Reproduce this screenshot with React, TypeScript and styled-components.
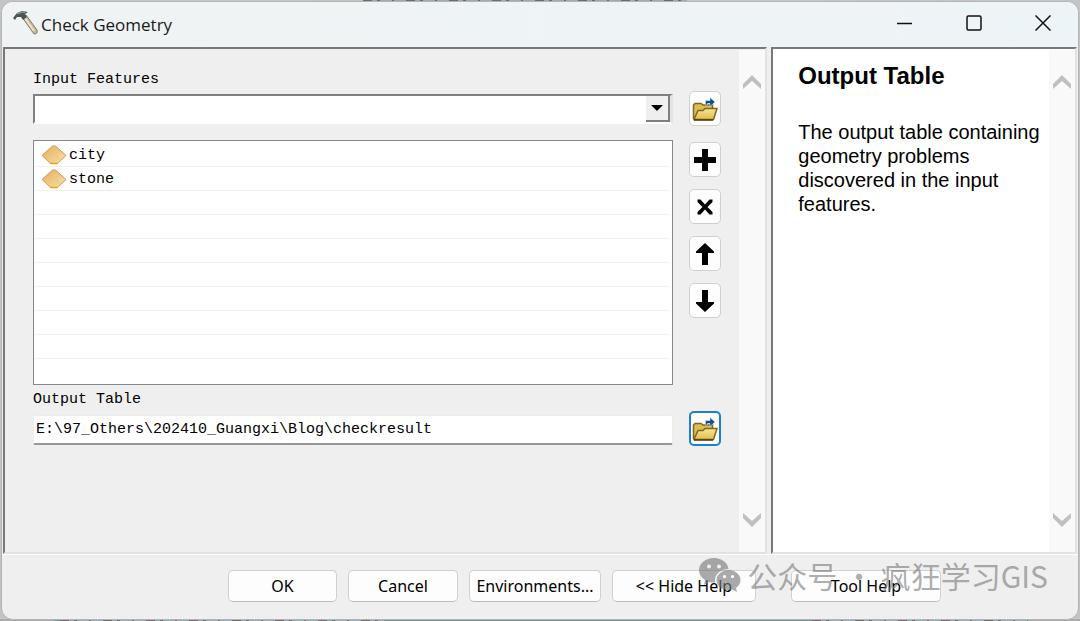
import React from 'react';
import styled, { createGlobalStyle } from 'styled-components';

const mono = '"Liberation Mono", "Noto Sans CJK SC", monospace';
const ui = '"Noto Sans", "Noto Sans CJK SC", sans-serif';

const GlobalStyle = createGlobalStyle`
  * { box-sizing: border-box; }
  body { margin: 0; background: #b4b8b9; color: #000; }
  button, input { font: inherit; color: inherit; }
`;

const speckle = 'repeating-linear-gradient(90deg, #6f6a6c 0 9px, #9aadb3 9px 14px, #6f6a6c 14px 17px, #9aadb3 17px 29px, #6f6a6c 29px 31px, #9aadb3 31px 43px)';

const Desktop = styled.div`
  min-height: 100vh;
  padding: 1px;
  display: flex;
  background:
    ${speckle} 48% 0 / 30% 1px no-repeat,
    ${speckle} 8% 100% / 30% 1px no-repeat,
    ${speckle} 94% 100% / 20% 1px no-repeat,
    linear-gradient(90deg, #a9a9a9 5%, #7e8f96 5%, #7e8f96 95%, #a9a9a9 95%) bottom / 100% 2px no-repeat,
    #c4c4c4;
`;

const Window = styled.section`
  position: relative;
  flex: 1;
  display: flex;
  flex-direction: column;
  border: 1px solid #b4b4b4;
  border-radius: 12px;
  overflow: hidden;
  background: #efefef;
`;

const TitleBar = styled.header`
  display: flex;
  align-items: flex-start;
  height: 45px;
  padding: 8px 0 0 10px;
  background: linear-gradient(90deg, #f0f3f4, #edf4f7);
`;

const Title = styled.h1`
  flex: 1;
  margin: 3px 0 0 3px;
  font: 400 17px/24px "Open Sans", "Noto Sans", sans-serif;
  color: #1a1a1a;
`;

const CaptionButtons = styled.div`
  display: flex;
  padding-right: 1px;
`;

const CaptionButton = styled.button`
  display: flex;
  align-items: center;
  justify-content: center;
  width: 69px;
  height: 26px;
  padding: 0;
  border: 0;
  background: none;
`;

const Panels = styled.main`
  flex: 1;
  display: grid;
  grid-template-columns: minmax(0, 5fr) minmax(0, 2fr);
  gap: 4px;
  padding: 0 1px;
`;

const Panel = styled.section<{ $white?: boolean }>`
  display: flex;
  padding: 1px 0 0 1px;
  border: 2px solid;
  border-color: #787878 #e3e3e3 #e3e3e3 #787878;
  background: ${(p) => (p.$white ? '#fff' : '#efefef')};
`;

const Form = styled.form`
  flex: 1;
  min-width: 0;
  display: grid;
  grid-template-columns: 1fr 32px;
  column-gap: 16px;
  align-content: start;
  padding: 16px 18px 0 27px;
  font: 400 15px/24px ${mono};
`;

const FieldLabel = styled.label`
  grid-column: 1 / -1;
  height: 25px;
  padding-top: 2px;
`;

const Combo = styled.div`
  display: flex;
  height: 30px;
  margin-top: 3px;
  border: solid;
  border-width: 2px 3px 2px 2px;
  border-color: #808080 #e3e3e3 #fff #808080;
  background: #fff;
`;

const ComboInput = styled.input`
  flex: 1;
  min-width: 0;
  padding: 0 4px;
  border: 0;
  outline: 0;
  background: none;
`;

const ComboArrow = styled.button`
  display: flex;
  align-items: center;
  justify-content: center;
  width: 24px;
  padding: 0;
  border: solid;
  border-width: 0 2px 2px 0;
  border-color: #808080;
  background: #efefef;
`;

const List = styled.ul`
  height: 245px;
  margin: 14px 0 1px;
  padding: 2px 3px 0 1px;
  list-style: none;
  border: 1px solid #828790;
  background: #fff;
`;

const ListRow = styled.li`
  display: flex;
  align-items: center;
  gap: 2px;
  height: 24px;
  padding-left: 6px;
  border-bottom: 1px solid #f0f0f0;
  &:last-child { border-bottom: 0; }
`;

const RowName = styled.span`
  padding-top: 2px;
`;

const ToolColumn = styled.div`
  display: flex;
  flex-direction: column;
  gap: 12px;
  padding-top: 16px;
`;

const IconButton = styled.button<{ $active?: boolean }>`
  display: flex;
  align-items: center;
  justify-content: center;
  width: 32px;
  height: 35px;
  padding: 0;
  border: ${(p) => (p.$active ? '2px solid #1a80d2' : '1px solid #cfcfcf')};
  border-radius: 5px;
  background: #fdfdfd;
`;

const OutputInput = styled.input`
  width: 100%;
  height: 30px;
  margin-top: 4px;
  padding: 0 2px;
  border: 1px solid #ececec;
  border-bottom: 2px solid #969696;
  border-radius: 2px;
  outline: 0;
  background: #fff;
`;

const ScrollBar = styled.div`
  display: flex;
  flex-direction: column;
  justify-content: space-between;
  align-items: center;
  width: 26px;
  padding: 24px 0;
  background: #f9f9f9;
`;

const ScrollButton = styled.button`
  display: flex;
  padding: 0;
  border: 0;
  background: none;
`;

const Help = styled.article`
  flex: 1;
  min-width: 0;
  padding: 12px 8px 0 24px;
  font: 400 20px/24px "Liberation Sans", Arial, sans-serif;
`;

const HelpTitle = styled.h2`
  margin: 0 0 30px;
  font-size: 24px;
  line-height: 28px;
`;

const HelpText = styled.p`
  margin: 0;
`;

const Footer = styled.footer`
  display: flex;
  justify-content: flex-end;
  gap: 11px;
  padding: 15px 137px 17px 16px;
  border-top: 1px solid #fff;
  font: 400 16px/24px ${ui};
`;

const PushButton = styled.button<{ $width: number; $apart?: boolean }>`
  width: ${(p) => p.$width}px;
  height: 32px;
  margin-left: ${(p) => (p.$apart ? '24px' : '0')};
  padding: 0;
  white-space: nowrap;
  border: 1px solid #d0d0d0;
  border-bottom-color: #bcbcbc;
  border-radius: 5px;
  background: #fdfdfd;
`;

const Watermark = styled.div`
  position: absolute;
  right: 30px;
  bottom: 24px;
  display: flex;
  align-items: center;
  gap: 6px;
  color: rgba(120, 120, 120, 0.62);
  font: 400 30px/40px "Noto Sans CJK SC", sans-serif;
  white-space: pre;
  pointer-events: none;
`;

const Hammer = () => (
  <svg width="26" height="26" viewBox="0 0 26 26" aria-hidden="true">
    <path d="M10 7 L14 5 L25 20 Q26 24 22 24 Z" fill="#c9b8a0" stroke="#85776a" />
    <path d="M13 8 L22 21" stroke="#eee1cc" strokeWidth="2" />
    <path d="M1 8 L5 3 L10 1 L16 2 L13 4 L15 7 L11 10 L9 7 L5 7 L3 10 Z" fill="#4c5357" />
    <path d="M5 4 L11 2 L13 3" stroke="#9ba4a7" fill="none" />
  </svg>
);

const Diamond = () => (
  <svg width="26" height="20" viewBox="0 0 26 20" aria-hidden="true">
    <defs>
      <linearGradient id="sand" x1="0" y1="0" x2="1" y2="1">
        <stop offset="0" stopColor="#e3ab58" />
        <stop offset="1" stopColor="#fbe3ac" />
      </linearGradient>
    </defs>
    <path d="M11.500 1 H14.500 L25 10.500 L16.500 18.500 H9.500 L1 10.500 Z" fill="url(#sand)" stroke="#cf9d52" strokeLinejoin="round" />
    <path d="M9.500 18.500 H16.500" stroke="#dca800" strokeWidth="1.5" />
  </svg>
);

const Folder = () => (
  <svg width="26" height="26" viewBox="0 0 26 26" aria-hidden="true">
    <defs>
      <linearGradient id="flap" x1="0" y1="0" x2="0" y2="1">
        <stop offset="0" stopColor="#f8e596" />
        <stop offset="1" stopColor="#e0bd4c" />
      </linearGradient>
    </defs>
    <path d="M1.500 23 V9 L3 7.500 H9 L11 9 H20.500 V13" fill="#d9bd59" stroke="#80671c" strokeWidth="1.5" />
    <path d="M2 23.500 L6 14.500 H11 L13 12.500 H25 L21.500 23.500 Z" fill="url(#flap)" stroke="#80671c" strokeWidth="1.5" />
    <path d="M2 24 H21" stroke="#4d3c10" strokeWidth="1.5" />
    <path d="M13.500 9 V4.500 H18 V1.500 L23 6 L18 10.500 V7.500 H15.500 V9 Z" fill="#0c4f94" stroke="#e8f1f8" strokeWidth=".5" />
  </svg>
);

const glyphs = {
  plus: 'M8 0 H14 V8 H22 V14 H14 V22 H8 V14 H0 V8 H8 Z',
  cross: 'M3.500 3.500 H6.500 L11 8.500 L15.500 3.500 H18.500 V6 L13.500 11 L18.500 16 V18.500 H15.500 L11 13.500 L6.500 18.500 H3.500 V16 L8.500 11 L3.500 6 Z',
  up: 'M11 0 L20 8.500 V10 H14 V22 H8 V10 H2 V8.500 Z',
  down: 'M11 22 L20 13.500 V12 H14 V0 H8 V12 H2 V13.500 Z',
};

const Glyph = ({ name }: { name: keyof typeof glyphs }) => (
  <svg width="22" height="22" viewBox="0 0 22 22" aria-hidden="true">
    <path d={glyphs[name]} />
  </svg>
);

const Chevron = ({ down }: { down?: boolean }) => (
  <svg width="18" height="16" viewBox="0 0 18 16" aria-hidden="true">
    <path d={down ? 'M0 1 L9 9 L18 1 V6 L9 15 L0 6 Z' : 'M0 15 L9 7 L18 15 V10 L9 1 L0 10 Z'} fill="#c0c0c0" />
  </svg>
);

const WeChat = () => (
  <svg width="42" height="36" viewBox="0 0 42 36" aria-hidden="true">
    <path
      fillRule="evenodd"
      fill="currentColor"
      d="M15 1 C23 1 29 6 29.500 12 C22 12 16 17 16 23 L16.300 25.500 C14 25.700 12 25.500 10 25 L5 28 L6 23 C2.500 20.500 0 17.500 0 13 C0 6 7 1 15 1 Z M10 7.500 A2 2 0 1 0 10 11.500 A2 2 0 1 0 10 7.500 Z M20 7.500 A2 2 0 1 0 20 11.500 A2 2 0 1 0 20 7.500 Z"
    />
    <path
      fillRule="evenodd"
      fill="currentColor"
      d="M29.500 13 C36 13 41.500 17.500 41.500 23 C41.500 26.500 39.500 29 37 31 L38 35 L33.500 32.500 C24 34.500 17.500 29.500 17.500 23 C17.500 17.500 23 13 29.500 13 Z M25.500 18 A1.600 1.600 0 1 0 25.500 21.200 A1.600 1.600 0 1 0 25.500 18 Z M33.500 18 A1.600 1.600 0 1 0 33.500 21.200 A1.600 1.600 0 1 0 33.500 18 Z"
    />
  </svg>
);

const Scroller = () => (
  <ScrollBar>
    <ScrollButton type="button" aria-label="Scroll up"><Chevron /></ScrollButton>
    <ScrollButton type="button" aria-label="Scroll down"><Chevron down /></ScrollButton>
  </ScrollBar>
);

const features = ['city', 'stone', '', '', '', '', '', '', '', ''];

export default function App() {
  return (
    <Desktop>
      <GlobalStyle />
      <Window>
        <TitleBar>
          <Hammer />
          <Title>Check Geometry</Title>
          <CaptionButtons>
            <CaptionButton aria-label="Minimize">
              <svg width="16" height="16"><path d="M0 8.500 H15" stroke="#111" strokeWidth="1.5" /></svg>
            </CaptionButton>
            <CaptionButton aria-label="Maximize">
              <svg width="16" height="16"><rect x="1" y="1" width="14" height="14" rx="1.500" fill="none" stroke="#111" strokeWidth="1.5" /></svg>
            </CaptionButton>
            <CaptionButton aria-label="Close">
              <svg width="16" height="16"><path d="M.5 .5 L15.500 15.500 M15.500 .5 L.5 15.500" stroke="#111" strokeWidth="1.5" /></svg>
            </CaptionButton>
          </CaptionButtons>
        </TitleBar>
        <Panels>
          <Panel>
            <Form onSubmit={(e) => e.preventDefault()}>
              <FieldLabel htmlFor="input-features">Input Features</FieldLabel>
              <Combo>
                <ComboInput id="input-features" />
                <ComboArrow type="button" aria-label="Open list">
                  <svg width="12" height="6"><path d="M0 0 H12 L6 6 Z" /></svg>
                </ComboArrow>
              </Combo>
              <IconButton type="button" aria-label="Browse input features"><Folder /></IconButton>
              <List>
                {features.map((name, i) => (
                  <ListRow key={i}>{name && <><Diamond /><RowName>{name}</RowName></>}</ListRow>
                ))}
              </List>
              <ToolColumn>
                <IconButton type="button" aria-label="Add"><Glyph name="plus" /></IconButton>
                <IconButton type="button" aria-label="Remove"><Glyph name="cross" /></IconButton>
                <IconButton type="button" aria-label="Move up"><Glyph name="up" /></IconButton>
                <IconButton type="button" aria-label="Move down"><Glyph name="down" /></IconButton>
              </ToolColumn>
              <FieldLabel htmlFor="output-table">Output Table</FieldLabel>
              <OutputInput id="output-table" defaultValue="E:\97_Others\202410_Guangxi\Blog\checkresult" />
              <IconButton type="button" $active aria-label="Browse output table"><Folder /></IconButton>
            </Form>
            <Scroller />
          </Panel>
          <Panel $white>
            <Help>
              <HelpTitle>Output Table</HelpTitle>
              <HelpText>The output table containing geometry problems discovered in the input features.</HelpText>
            </Help>
            <Scroller />
          </Panel>
        </Panels>
        <Footer>
          <PushButton $width={109}>OK</PushButton>
          <PushButton $width={110}>Cancel</PushButton>
          <PushButton $width={132}>Environments...</PushButton>
          <PushButton $width={144}>&lt;&lt; Hide Help</PushButton>
          <PushButton $width={150} $apart>Tool Help</PushButton>
        </Footer>
        <Watermark><WeChat /><span>公众号 · 疯狂学习GIS</span></Watermark>
      </Window>
    </Desktop>
  );
}
